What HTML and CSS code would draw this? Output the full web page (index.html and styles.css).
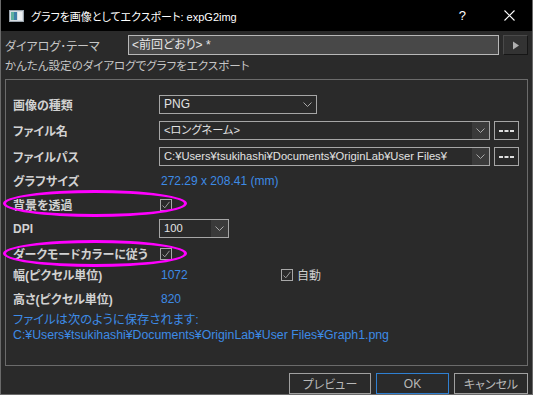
FILE: index.html
```html
<!DOCTYPE html>
<html lang="ja">
<head>
<meta charset="utf-8">
<title>グラフを画像としてエクスポート</title>
<link rel="stylesheet" href="styles.css">
</head>
<body>
<div class="window">
  <div class="titlebar">
    <svg class="app-icon" width="15" height="12" viewBox="0 0 15 12">
      <rect x="0.5" y="0.5" width="14" height="11" fill="#d8dde2" stroke="#9aa4ad"/>
      <rect x="2" y="2" width="6" height="8" fill="#3f7fa8"/>
      <rect x="2" y="2" width="3" height="8" fill="#5fb0a0"/>
      <rect x="9" y="2" width="4" height="8" fill="#eef1f3"/>
    </svg>
    <span class="title">グラフを画像としてエクスポート: expG2img</span>
    <span class="help">?</span>
    <svg class="close" width="11" height="11" viewBox="0 0 11 11">
      <path d="M0.5 0.5 L10.5 10.5 M10.5 0.5 L0.5 10.5" stroke="#ffffff" stroke-width="1.1" fill="none"/>
    </svg>
  </div>

  <div class="body">
    <div class="theme-row">
      <span class="theme-label">ダイアログ･テーマ</span>
      <div class="theme-combo">&lt;前回どおり&gt; *</div>
      <div class="theme-btn">
        <svg width="8" height="9" viewBox="0 0 8 9"><path d="M1 0.5 L7 4.5 L1 8.5 Z" fill="#b0b0b0"/></svg>
      </div>
    </div>
    <div class="desc">かんたん設定のダイアログでグラフをエクスポート</div>

    <div class="panel">
      <div class="row r1">
        <span class="label">画像の種類</span>
        <div class="select w-type"><span class="val big">PNG</span>
          <span class="arrow plain"><svg width="9" height="5" viewBox="0 0 9 5"><path d="M0.5 0.5 L4.5 4.5 L8.5 0.5" stroke="#a8a8a8" fill="none"/></svg></span>
        </div>
      </div>
      <div class="row r2">
        <span class="label">ファイル名</span>
        <div class="select w-file"><span class="val">&lt;ロングネーム&gt;</span>
          <span class="arrow"><svg width="9" height="5" viewBox="0 0 9 5"><path d="M0.5 0.5 L4.5 4.5 L8.5 0.5" stroke="#a8a8a8" fill="none"/></svg></span>
        </div>
        <div class="dots"><svg width="15" height="2" viewBox="0 0 15 2"><rect x="0" y="0" width="4" height="2" fill="#e0e0e0"/><rect x="5.5" y="0" width="4" height="2" fill="#e0e0e0"/><rect x="11" y="0" width="4" height="2" fill="#e0e0e0"/></svg></div>
      </div>
      <div class="row r3">
        <span class="label">ファイルパス</span>
        <div class="select w-file"><span class="val">C:¥Users¥tsukihashi¥Documents¥OriginLab¥User Files¥</span>
          <span class="arrow"><svg width="9" height="5" viewBox="0 0 9 5"><path d="M0.5 0.5 L4.5 4.5 L8.5 0.5" stroke="#a8a8a8" fill="none"/></svg></span>
        </div>
        <div class="dots"><svg width="15" height="2" viewBox="0 0 15 2"><rect x="0" y="0" width="4" height="2" fill="#e0e0e0"/><rect x="5.5" y="0" width="4" height="2" fill="#e0e0e0"/><rect x="11" y="0" width="4" height="2" fill="#e0e0e0"/></svg></div>
      </div>
      <div class="row r4">
        <span class="label">グラフサイズ</span>
        <span class="value">272.29 x 208.41 (mm)</span>
      </div>
      <div class="row r5">
        <span class="label">背景を透過</span>
        <span class="check"><svg width="12" height="12" viewBox="0 0 12 12"><rect x="0.5" y="0.5" width="11" height="11" fill="none" stroke="#a8a8a8"/><path d="M2.5 6.5 L4.8 8.8 L9.5 2.8" stroke="#9c9c9c" fill="none"/></svg></span>
      </div>
      <div class="row r6">
        <span class="label">DPI</span>
        <div class="select w-dpi"><span class="val">100</span>
          <span class="arrow"><svg width="9" height="5" viewBox="0 0 9 5"><path d="M0.5 0.5 L4.5 4.5 L8.5 0.5" stroke="#a8a8a8" fill="none"/></svg></span>
        </div>
      </div>
      <div class="row r7">
        <span class="label">ダークモードカラーに従う</span>
        <span class="check"><svg width="12" height="12" viewBox="0 0 12 12"><rect x="0.5" y="0.5" width="11" height="11" fill="none" stroke="#a8a8a8"/><path d="M2.5 6.5 L4.8 8.8 L9.5 2.8" stroke="#9c9c9c" fill="none"/></svg></span>
      </div>
      <div class="row r8">
        <span class="label">幅(ピクセル単位)</span>
        <span class="value num">1072</span>
        <span class="auto">
          <svg width="12" height="12" viewBox="0 0 12 12"><rect x="0.5" y="0.5" width="11" height="11" fill="none" stroke="#a8a8a8"/><path d="M2.5 6.5 L4.8 8.8 L9.5 2.8" stroke="#9c9c9c" fill="none"/></svg>
          <span class="auto-text">自動</span>
        </span>
      </div>
      <div class="row r9">
        <span class="label">高さ(ピクセル単位)</span>
        <span class="value">820</span>
      </div>
      <div class="note">
        <div>ファイルは次のように保存されます:</div>
        <div>C:¥Users¥tsukihashi¥Documents¥OriginLab¥User Files¥Graph1.png</div>
      </div>
    </div>

    <div class="buttons">
      <div class="btn btn-preview">プレビュー</div>
      <div class="btn btn-ok">OK</div>
      <div class="btn btn-cancel">キャンセル</div>
    </div>
  </div>

  <div class="mark mark1"></div>
  <div class="mark mark2"></div>
</div>
</body>
</html>
```

FILE: styles.css
```css
* { box-sizing: border-box; }

html, body {
  margin: 0;
  padding: 0;
  background: #2b2b2b;
}

body {
  font-family: "Liberation Sans", "Noto Sans CJK JP", sans-serif;
  font-size: 12px;
  color: #cfcfcf;
}

.window {
  position: relative;
  width: 533px;
  height: 395px;
  background: #2a2a2a;
  border: 1px solid #6a6a6a;
  border-top: none;
  display: flex;
  flex-direction: column;
}

/* title bar */
.titlebar {
  height: 31px;
  background: #000;
  display: flex;
  align-items: center;
  padding-left: 8px;
  flex: none;
}
.app-icon { flex: none; margin-top: 1px; }
.title {
  margin-left: 7px;
  color: #ffffff;
  font-size: 11px;
  font-feature-settings: "palt";
}
.help {
  margin-left: auto;
  color: #ffffff;
  font-size: 13px;
  font-family: "Liberation Sans", sans-serif;
  margin-right: 38px;
}
.close { margin-right: 17px; flex: none; }

/* body */
.body {
  flex: 1;
  display: flex;
  flex-direction: column;
  padding: 4px 4px 0 4px;
}

.theme-row {
  display: flex;
  align-items: center;
  height: 20px;
}
.theme-label {
  width: 123px;
  flex: none;
  color: #c6c6c6;
  font-feature-settings: "palt";
}
.theme-combo {
  flex: 1;
  height: 20px;
  background: #484848;
  border: 1px solid #b8b8b8;
  color: #e6e6e6;
  padding-left: 3px;
  line-height: 18px;
  font-feature-settings: "palt";
}
.theme-btn {
  width: 25px;
  height: 20px;
  flex: none;
  margin-left: 4px;
  background: #333333;
  border: 1px solid;
  border-color: #4a4a4a #161616 #161616 #4a4a4a;
  display: flex;
  align-items: center;
  justify-content: center;
}

.desc {
  margin-top: 3px;
  line-height: 16px;
  font-size: 11.5px;
  color: #c6c6c6;
  font-feature-settings: "palt";
}

/* panel */
.panel {
  margin-top: 5px;
  height: 287px;
  border: 1px solid #6b6b6b;
  padding: 15px 0 0 7px;
  display: flex;
  flex-direction: column;
}

.row {
  display: flex;
  align-items: center;
  height: 19px;
  margin-top: 5px;
}
.r1 { margin-top: 0; }
.r2, .r3 { margin-top: 7px; }
.r4 { margin-top: 5px; }
.r5 { margin-top: 5px; }
.r6 { margin-top: 5px; }
.r7 { margin-top: 6px; }
.r8 { margin-top: 2px; }
.r9 { margin-top: 5px; }

.label {
  width: 146px;
  flex: none;
  font-weight: bold;
  color: #d2d2d2;
  font-size: 12px;
  font-feature-settings: "palt";
}

.select {
  height: 19px;
  border: 1px solid #a6a6a6;
  display: flex;
  align-items: stretch;
  color: #e2e2e2;
}
.select .val {
  flex: 1;
  padding-left: 4px;
  line-height: 17px;
  font-size: 11.2px;
  white-space: nowrap;
  overflow: hidden;
  font-feature-settings: "palt";
}
.select .val.big { font-size: 12px; }
.select .arrow {
  width: 17px;
  flex: none;
  background: #3a3a3a;
  display: flex;
  align-items: center;
  justify-content: center;
}
.select .arrow.plain { background: transparent; width: 18px; }
.w-type { width: 158px; }
.w-file { width: 331px; }
.w-dpi { width: 70px; }

.dots {
  width: 25px;
  height: 19px;
  margin-left: 4px;
  border: 1px solid #a6a6a6;
  display: flex;
  align-items: center;
  justify-content: center;
}

.value {
  color: #3d8be6;
  padding-left: 2px;
}
.value.num { width: 122px; flex: none; }

.check {
  width: 12px;
  height: 12px;
  margin-left: 1px;
  display: flex;
}

.auto {
  display: flex;
  align-items: center;
}
.auto-text {
  margin-left: 4px;
  color: #cfcfcf;
}

.note {
  margin-top: 5px;
  color: #3d8be6;
  line-height: 15px;
  font-size: 12.3px;
  font-feature-settings: "palt";
}

/* buttons */
.buttons {
  display: flex;
  justify-content: flex-end;
  margin-top: 7px;
  gap: 5px;
}
.btn {
  height: 21px;
  border: 1px solid #a0a0a0;
  color: #b8b8b8;
  display: flex;
  align-items: center;
  justify-content: center;
  font-feature-settings: "palt";
}
.btn-preview { width: 82px; }
.btn-ok { width: 73px; border-color: #2f80d2; }
.btn-cancel { width: 74px; }

/* annotation marks */
.mark {
  position: absolute;
  left: 2px;
  width: 184px;
  height: 27px;
  border: 3px solid #ff00ff;
  border-radius: 50%;
}
.mark1 { top: 190px; }
.mark2 { top: 240px; }
```
